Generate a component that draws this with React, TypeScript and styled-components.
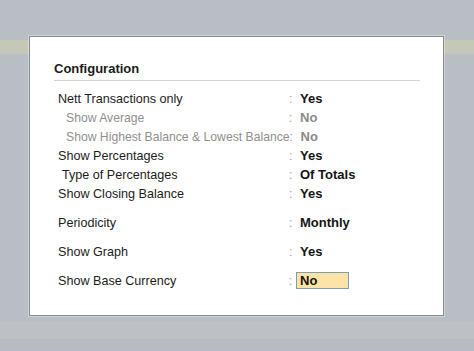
import * as React from "react";
import styled, { createGlobalStyle } from "styled-components";

const GlobalStyle = createGlobalStyle`
  html, body {
    margin: 0;
    padding: 0;
  }
  body {
    width: 474px;
    height: 351px;
    overflow: hidden;
    font-family: "Liberation Sans", Arial, sans-serif;
    background: linear-gradient(
      to bottom,
      #b9bdc4 0px,
      #b9bdc4 40px,
      #c5c7b7 40px,
      #c5c7b7 54px,
      #b9bdc4 54px,
      #b9bdc4 321px,
      #bdc1c6 321px,
      #bdc1c6 339px,
      #b8bcc2 339px
    );
  }
`;

let Page = styled.div`
  padding: 36px 0 0 29px;
`;

let Panel = styled.div`
  box-sizing: border-box;
  width: 415px;
  height: 280px;
  background: #ffffff;
  border: 1px solid #868a90;
  box-shadow: 0 0 0 1px rgba(255, 255, 255, 0.35);
  padding: 24px 23px 0 24px;
`;

let Title = styled.div`
  font-size: 13px;
  line-height: 16px;
  font-weight: bold;
  color: #1b1b1b;
  padding-bottom: 3px;
  border-bottom: 1px solid #d3d3d3;
`;

let Rows = styled.div`
  margin-top: 8px;
  display: flex;
  flex-direction: column;
`;

interface RowProps {
  $spaced?: boolean;
}

let Row = styled.div<RowProps>`
  display: flex;
  align-items: center;
  height: 19px;
  margin-top: ${(p) => (p.$spaced ? "10px" : "0")};
  padding-left: 4px;
`;

interface LabelProps {
  $indent: number;
  $muted?: boolean;
}

let Label = styled.div<LabelProps>`
  box-sizing: border-box;
  flex: 0 0 231px;
  padding-left: ${(p) => p.$indent}px;
  white-space: nowrap;
  font-size: ${(p) => (p.$muted ? "12.2px" : "12.6px")};
  color: ${(p) => (p.$muted ? "#8f8f8f" : "#1c1c1c")};
`;

let Colon = styled.div`
  flex: 0 0 7px;
  font-size: 12px;
  color: #9a9a9a;
`;

interface ValueProps {
  $muted?: boolean;
  $active?: boolean;
}

let Value = styled.div<ValueProps>`
  box-sizing: border-box;
  height: 17px;
  line-height: 15px;
  width: ${(p) => (p.$active ? "53px" : "auto")};
  padding-left: 3px;
  font-size: 13px;
  font-weight: bold;
  color: ${(p) => (p.$muted ? "#8a8a8a" : "#141414")};
  background: ${(p) => (p.$active ? "#fde4a6" : "transparent")};
  border: 1px solid ${(p) => (p.$active ? "#7f9cb3" : "transparent")};
`;

interface Setting {
  label: string;
  value: string;
  indent?: number;
  muted?: boolean;
  spaced?: boolean;
  active?: boolean;
}

const settings: Setting[] = [
  { label: "Nett Transactions only", value: "Yes" },
  { label: "Show Average", value: "No", indent: 8, muted: true },
  { label: "Show Highest Balance & Lowest Balance", value: "No", indent: 8, muted: true },
  { label: "Show Percentages", value: "Yes" },
  { label: "Type of Percentages", value: "Of Totals", indent: 4 },
  { label: "Show Closing Balance", value: "Yes" },
  { label: "Periodicity", value: "Monthly", spaced: true },
  { label: "Show Graph", value: "Yes", spaced: true },
  { label: "Show Base Currency", value: "No", spaced: true, active: true },
];

const App: React.FunctionComponent = () => {
  return (
    <>
      <GlobalStyle />
      <Page>
        <Panel>
          <Title>Configuration</Title>
          <Rows>
            {settings.map((s) => (
              <Row key={s.label} $spaced={s.spaced}>
                <Label $indent={s.indent || 0} $muted={s.muted}>
                  {s.label}
                </Label>
                <Colon>:</Colon>
                <Value $muted={s.muted} $active={s.active}>
                  {s.value}
                </Value>
              </Row>
            ))}
          </Rows>
        </Panel>
      </Page>
    </>
  );
};

export default App;
